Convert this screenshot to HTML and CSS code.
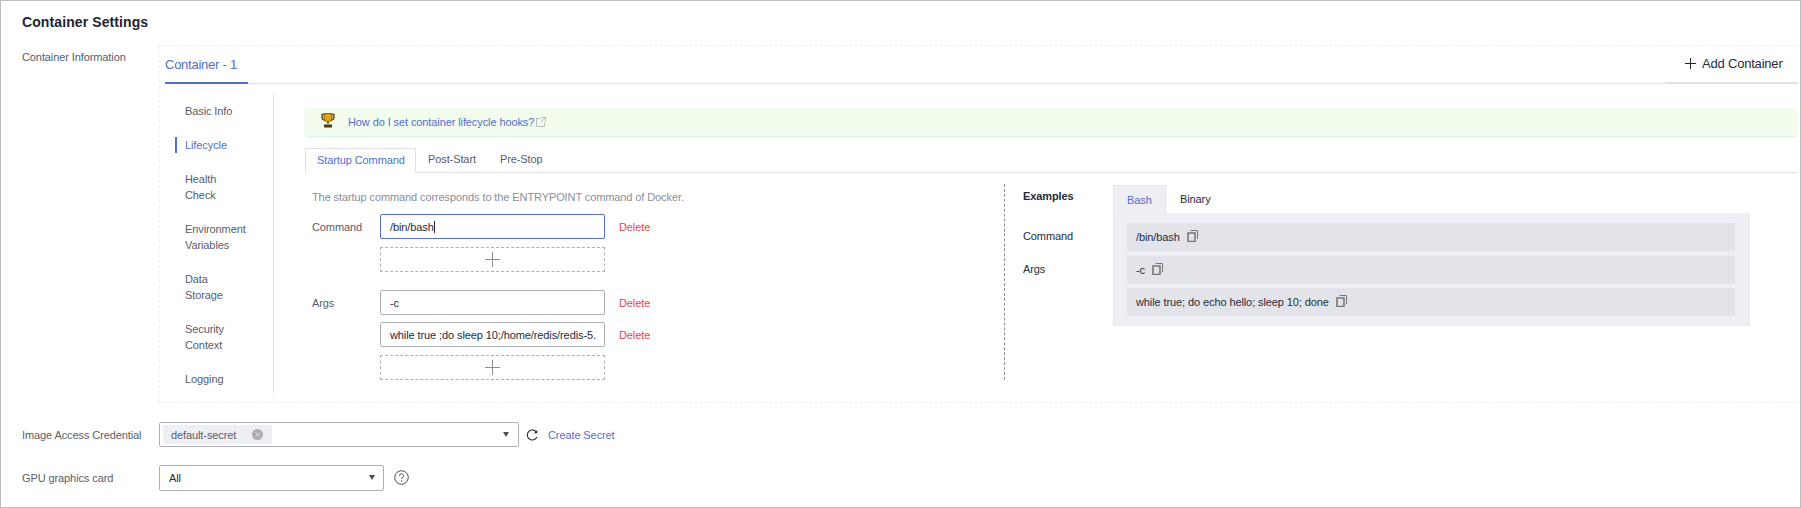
FILE: index.html
```html
<!DOCTYPE html>
<html lang="en">
<head>
<meta charset="utf-8">
<title>Container Settings</title>
<link rel="stylesheet" href="styles.css">
</head>
<body>
<div class="page">
  <h2 class="title">Container Settings</h2>
  <div class="form-row first">
    <div class="form-label info-label">Container Information</div>
    <div class="container-box">
      <div class="tab-bar">
        <div class="tab-main">Container - 1</div>
        <div class="add-btn">
          <svg class="add-icon" viewBox="0 0 11 11"><path d="M5.5 0V11M0 5.5H11" stroke="#252b3a" stroke-width="1" fill="none"/></svg>
          <span>Add Container</span>
        </div>
      </div>
      <div class="content">
        <ul class="side">
          <li class="side-item">Basic Info</li>
          <li class="side-item active">Lifecycle</li>
          <li class="side-item">Health Check</li>
          <li class="side-item">Environment Variables</li>
          <li class="side-item">Data Storage</li>
          <li class="side-item">Security Context</li>
          <li class="side-item">Logging</li>
        </ul>
        <div class="main">
          <div class="alert">
            <svg class="trophy" viewBox="0 0 14 15">
              <path d="M1 1.5H13V4C13 6 11.5 7 10 7H4C2.5 7 1 6 1 4Z" fill="none" stroke="#6b4a08" stroke-width="1.4"/>
              <path d="M3 .5H11V5.5C11 7.5 9 8.8 7 8.8S3 7.5 3 5.5Z" fill="#e0a010" stroke="#6b4a08" stroke-width=".8"/>
              <path d="M6 8.5H8V11H6Z" fill="#a87408"/>
              <path d="M3 11.5H11V14.5H3Z" fill="#4f3a10"/>
            </svg>
            <span class="link">How do I set container lifecycle hooks?</span>
            <svg class="ext" viewBox="0 0 10 10"><path d="M4.5 1.5H.5V9.5H8.5V5.5M5.5 .5H9.5V4.5M9.5 .5L4.5 5.5" fill="none" stroke="#bbb" stroke-width="1"/></svg>
          </div>
          <div class="subtabs">
            <div class="subtab active">Startup Command</div>
            <div class="subtab">Post-Start</div>
            <div class="subtab">Pre-Stop</div>
          </div>
          <div class="columns">
            <div class="left">
              <p class="desc">The startup command corresponds to the ENTRYPOINT command of Docker.</p>
              <div class="cmd-row">
                <div class="cmd-label">Command</div>
                <div class="field focus"><span class="caret">/bin/bash</span></div>
                <div class="delete">Delete</div>
              </div>
              <div class="add-row">
                <div class="add-box"><svg class="plus" viewBox="0 0 15 15"><path d="M7.5 0V15M0 7.5H15" stroke="#8a8e99" stroke-width="1" fill="none"/></svg></div>
              </div>
              <div class="cmd-row args">
                <div class="cmd-label">Args</div>
                <div class="field">-c</div>
                <div class="delete">Delete</div>
              </div>
              <div class="cmd-row second">
                <div class="cmd-label"></div>
                <div class="field">while true ;do sleep 10;/home/redis/redis-5.</div>
                <div class="delete">Delete</div>
              </div>
              <div class="add-row">
                <div class="add-box"><svg class="plus" viewBox="0 0 15 15"><path d="M7.5 0V15M0 7.5H15" stroke="#8a8e99" stroke-width="1" fill="none"/></svg></div>
              </div>
            </div>
            <div class="right">
              <div class="ex-labels">
                <div class="ex-title">Examples</div>
                <div class="ex-cmd">Command</div>
                <div class="ex-args">Args</div>
              </div>
              <div class="ex-body">
                <div class="ex-tabs">
                  <div class="ex-tab active">Bash</div>
                  <div class="ex-tab">Binary</div>
                </div>
                <div class="ex-panel">
                  <div class="ex-line"><span>/bin/bash</span><svg class="copy" viewBox="0 0 12 12"><path d="M3.5 .5H10.5V9" fill="none" stroke="#777" stroke-width="1"/><path d="M1 3H8V11.5H1Z" fill="none" stroke="#777" stroke-width="1.6"/></svg></div>
                  <div class="ex-line"><span>-c</span><svg class="copy" viewBox="0 0 12 12"><path d="M3.5 .5H10.5V9" fill="none" stroke="#777" stroke-width="1"/><path d="M1 3H8V11.5H1Z" fill="none" stroke="#777" stroke-width="1.6"/></svg></div>
                  <div class="ex-line"><span>while true; do echo hello; sleep 10; done</span><svg class="copy" viewBox="0 0 12 12"><path d="M3.5 .5H10.5V9" fill="none" stroke="#777" stroke-width="1"/><path d="M1 3H8V11.5H1Z" fill="none" stroke="#777" stroke-width="1.6"/></svg></div>
                </div>
              </div>
            </div>
          </div>
        </div>
      </div>
    </div>
  </div>
  <div class="form-row credential">
    <div class="form-label">Image Access Credential</div>
    <div class="select wide">
      <div class="tag"><span>default-secret</span><svg class="tag-x" viewBox="0 0 11 11"><circle cx="5.5" cy="5.5" r="5.5" fill="#aaadb5"/><path d="M3.5 3.5L7.5 7.5M7.5 3.5L3.5 7.5" stroke="#e4e5ea" stroke-width="1"/></svg></div>
      <div class="arrow"></div>
    </div>
    <svg class="refresh" viewBox="0 0 12 12"><path d="M10.6 3.4A5 5 0 1 0 10.9 8" fill="none" stroke="#252b3a" stroke-width="1.1"/><path d="M11.3 .9V4.2H8Z" fill="#252b3a"/></svg>
    <span class="link create">Create Secret</span>
  </div>
  <div class="form-row gpu">
    <div class="form-label">GPU graphics card</div>
    <div class="select narrow">
      <span class="sel-text">All</span>
      <div class="arrow"></div>
    </div>
    <svg class="help" viewBox="0 0 15 15"><circle cx="7.5" cy="7.5" r="6.8" fill="none" stroke="#4a4f5c" stroke-width="1"/><path d="M5.4 5.8C5.4 4.6 6.3 3.9 7.5 3.9S9.6 4.6 9.6 5.7C9.6 7.2 7.5 7.2 7.5 9" fill="none" stroke="#4a4f5c" stroke-width="1"/><path d="M7 10.2H8V11.4H7Z" fill="#4a4f5c"/></svg>
  </div>
</div>
</body>
</html>
```
FILE: styles.css
```css
* { box-sizing: border-box; }
html, body { margin: 0; padding: 0; background: #fff; }
body { font-family: "Liberation Sans", Arial, sans-serif; font-size: 11px; letter-spacing: -0.1px; color: #252b3a; }
.page { width: 1801px; height: 508px; border: 1px solid #bdbdbd; padding: 11px 2px 0 21px; overflow: hidden; }
.title { margin: 0; font-size: 14px; letter-spacing: 0.1px; line-height: 20px; font-weight: 700; color: #1f2430; }
.form-row { display: flex; align-items: center; }
.form-row.first { align-items: flex-start; margin-top: 13px; }
.form-label { width: 137px; flex: none; color: #575d6c; line-height: 16px; }
.info-label { padding-top: 4px; }
.credential { margin-top: 19px; height: 25px; }
.gpu { margin-top: 18px; height: 26px; }

.container-box { flex: 1; border: 1px dashed #eeeff2; border-right: 0; padding-bottom: 9px; min-width: 0; }
.tab-bar { height: 38px; margin-left: 5px; display: flex; justify-content: space-between; border-bottom: 1px solid #dfe1e6; }
.tab-main { width: 83px; height: 38px; line-height: 37px; font-size: 13px; letter-spacing: -0.25px; color: #526ecc; border-bottom: 2px solid #526ecc; }
.add-btn { width: 132px; height: 38px; display: flex; align-items: center; padding: 0 0 2px 19px; font-size: 13px; letter-spacing: -0.2px; color: #252b3a; border-bottom: 2px solid #dfe1e6; }
.add-icon { width: 11px; height: 11px; margin-right: 6px; }

.content { display: flex; margin-top: 10px; }
.side { list-style: none; margin: 0 0 0 15px; padding: 9px 0 6px 0; width: 99px; flex: none; border-right: 1px solid #dfe1e6; }
.side-item { width: 72px; padding-left: 8px; border-left: 2px solid transparent; line-height: 16px; color: #575d6c; margin-bottom: 18px; }
.side-item:last-child { margin-bottom: 0; }
.side-item.active { color: #526ecc; border-left-color: #526ecc; }

.main { flex: 1; padding: 14px 1px 0 31px; min-width: 0; }
.alert { height: 28px; display: flex; align-items: center; padding-left: 16px; background: #f3fdee; border-radius: 2px; box-shadow: 0 1px 2px #d5eee6; }
.trophy { width: 14px; height: 15px; margin: -4px 13px 0 0; }
.link { color: #526ecc; }
.ext { width: 10px; height: 10px; margin-left: 2px; }

.subtabs { display: flex; height: 25px; margin-top: 12px; border-bottom: 1px solid #dfe1e6; }
.subtab { padding: 0 12px; line-height: 23px; color: #575d6c; }
.subtab.active { width: 111px; padding: 0 0 0 11px; height: 25px; color: #526ecc; background: #fff; border: 1px solid #dfe1e6; border-bottom-color: #fff; }

.columns { display: flex; margin-top: 11px; }
.left { width: 699px; flex: none; padding-left: 7px; }
.desc { margin: 5px 0 0; line-height: 16px; color: #8a8e99; }
.cmd-row { display: flex; align-items: center; margin-top: 9px; height: 25px; }
.cmd-row.args { margin-top: 18px; }
.cmd-row.second { margin-top: 7px; }
.cmd-label { width: 68px; flex: none; color: #575d6c; }
.field { width: 225px; height: 25px; flex: none; border: 1px solid #adb0b8; border-radius: 2px; padding: 0 8px 0 9px; line-height: 24px; color: #252b3a; white-space: nowrap; overflow: hidden; }
.field.focus { border-color: #526ecc; }
.caret { border-right: 1px solid #252b3a; }
.delete { margin-left: 14px; color: #e54545; }
.add-row { padding-left: 68px; margin-top: 8px; }
.add-box { width: 225px; height: 25px; border: 1px dashed #adb0b8; display: flex; align-items: center; justify-content: center; }
.plus { width: 15px; height: 15px; }

.right { flex: 1; height: 196px; border-left: 1px dashed #8a8e99; padding-left: 18px; display: flex; }
.ex-labels { width: 90px; flex: none; padding-top: 4px; line-height: 16px; color: #252b3a; }
.ex-title { font-weight: 700; }
.ex-cmd { margin-top: 24px; }
.ex-args { margin-top: 17px; }
.ex-body { width: 637px; flex: none; padding-top: 1px; }
.ex-tabs { display: flex; height: 28px; }
.ex-tab { padding: 0 14px; line-height: 29px; color: #252b3a; }
.ex-tab.active { padding: 0 13px; width: 53px; color: #526ecc; background: #eeeff4; border: 1px solid #e4e5ea; border-bottom: 0; }
.ex-panel { height: 113px; background: #eeeff4; border: 1px solid #e8e9ee; border-top: 0; padding: 10px 14px 0 13px; display: flex; flex-direction: column; gap: 4.5px; }
.ex-line { height: 28px; background: #e3e4e9; padding-left: 9px; display: flex; align-items: center; color: #252b3a; }
.copy { width: 12px; height: 12px; margin: -2px 0 0 7px; }

.select { position: relative; height: 25px; flex: none; border: 1px solid #adb0b8; border-radius: 2px; display: flex; align-items: center; }
.select.wide { width: 360px; padding-left: 3px; }
.select.narrow { width: 225px; height: 26px; padding-left: 9px; }
.select.narrow .arrow { right: 8px; }
.tag { width: 109px; height: 19px; background: #eeeff4; border-radius: 2px; display: flex; align-items: center; justify-content: space-between; padding: 0 9px 0 8px; color: #575d6c; }
.tag-x { width: 11px; height: 11px; }
.arrow { position: absolute; right: 9px; top: 9px; width: 0; height: 0; border-left: 3.5px solid transparent; border-right: 3.5px solid transparent; border-top: 5px solid #4a4f5c; }
.refresh { width: 12px; height: 12px; margin-left: 7px; }
.create { margin-left: 10px; }
.help { width: 15px; height: 15px; margin: -2px 0 0 10px; }
```
